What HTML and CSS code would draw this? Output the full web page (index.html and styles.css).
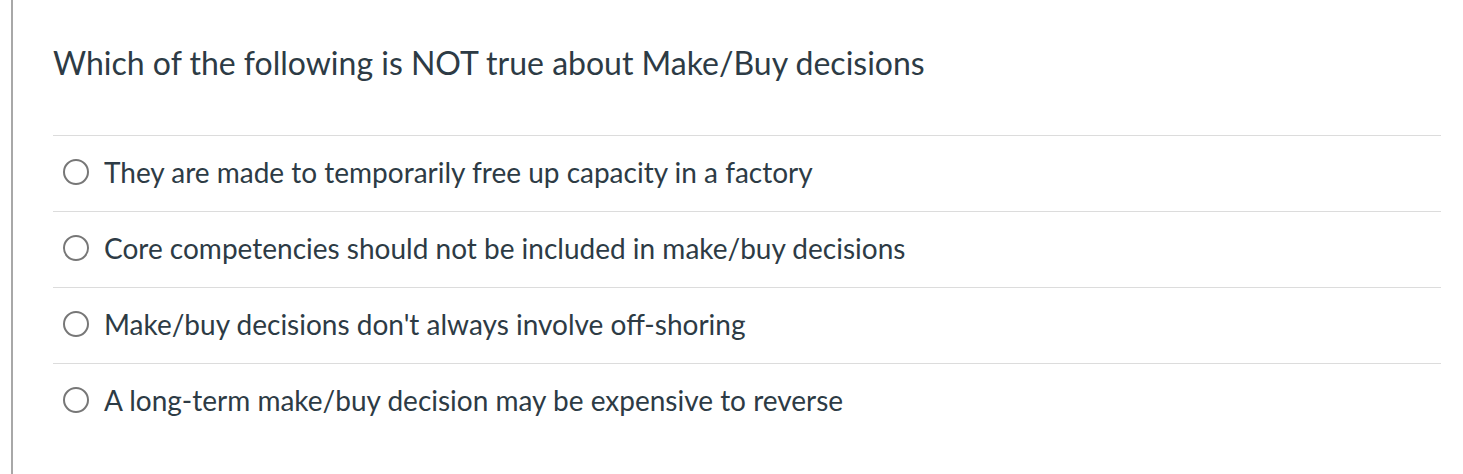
FILE: index.html
```html
<!DOCTYPE html>
<html>
<head>
<meta charset="utf-8">
<link rel="stylesheet" href="styles.css">
</head>
<body>
<div class="question">
  <div class="question-text">Which of the following is NOT true about Make/Buy decisions</div>
  <div class="answers">
    <label class="answer"><span class="radio"></span><span class="answer-text">They are made to temporarily free up capacity in a factory</span></label>
    <label class="answer"><span class="radio"></span><span class="answer-text">Core competencies should not be included in make/buy decisions</span></label>
    <label class="answer"><span class="radio"></span><span class="answer-text">Make/buy decisions don't always involve off-shoring</span></label>
    <label class="answer"><span class="radio"></span><span class="answer-text">A long-term make/buy decision may be expensive to reverse</span></label>
  </div>
</div>
</body>
</html>
```
FILE: styles.css
```css
html, body {
  margin: 0;
  padding: 0;
  background: #fff;
}
body {
  font-family: Lato, "Liberation Sans", sans-serif;
  color: #2d3b45;
  height: 474px;
  overflow: hidden;
}
.question {
  margin-left: 11px;
  border-left: 2px solid #a8a8a8;
  padding: 0 22px 0 40px;
  height: 474px;
  box-sizing: border-box;
}
.question-text {
  font-size: 32px;
  line-height: 40px;
  padding-top: 43px;
  height: 135px;
  box-sizing: border-box;
}
.answers {
  display: flex;
  flex-direction: column;
}
.answer {
  display: flex;
  align-items: center;
  border-top: 1.5px solid #dcdcdc;
  height: 76px;
  box-sizing: border-box;
  padding-left: 10px;
  padding-bottom: 3px;
}
.radio {
  width: 22px;
  height: 22px;
  border: 2px solid #777;
  border-radius: 50%;
  flex: none;
  margin-right: 15px;
}
.answer-text {
  font-size: 28px;
}
```
